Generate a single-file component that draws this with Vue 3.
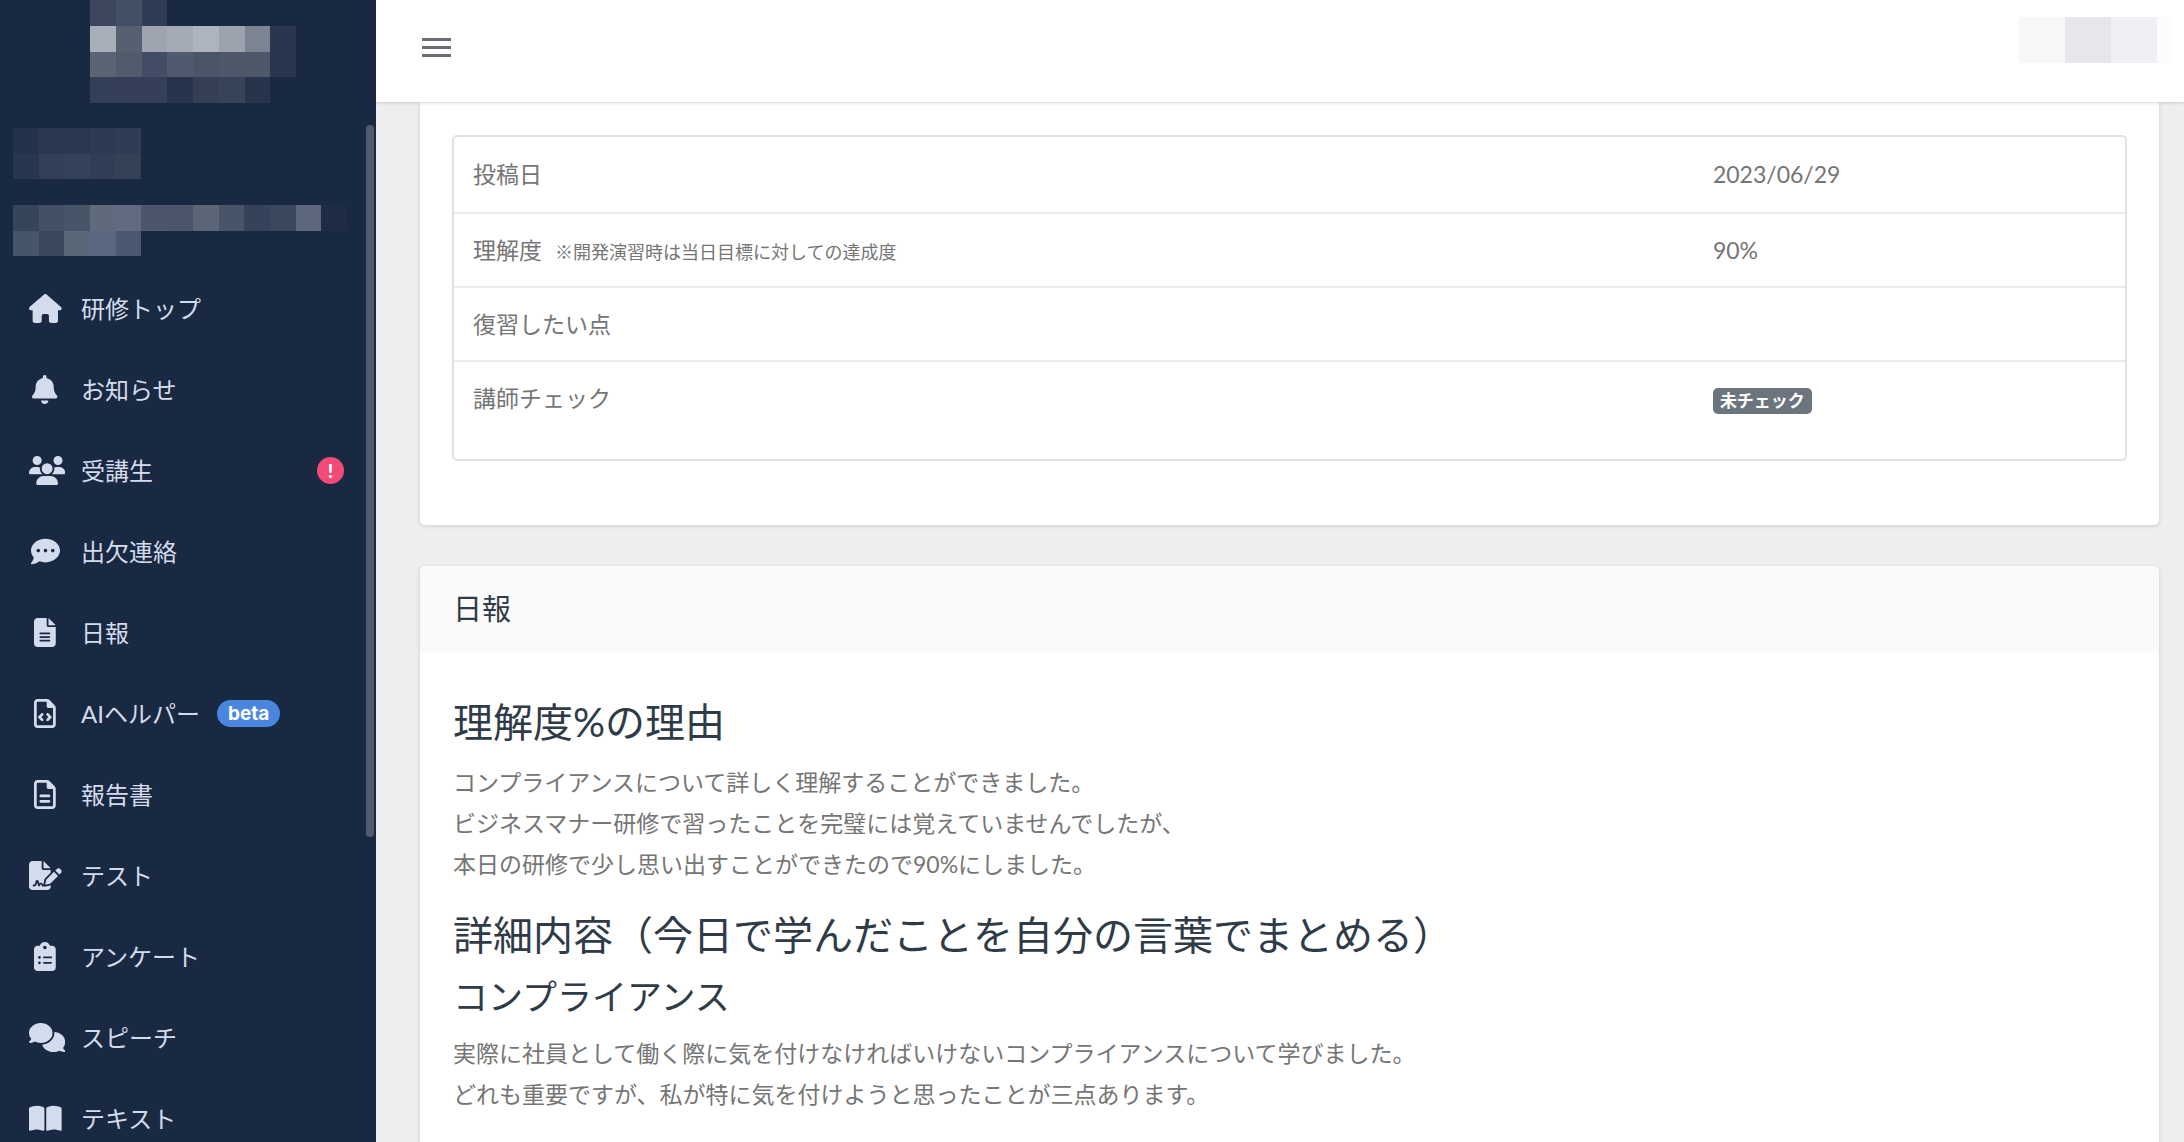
<script setup>
const logo = [
  ['#3c475d', '#434f65', '#303c54'],
  ['#a9afb9', '#556071', '#9ea4b0', '#a4abb5', '#afb5c0', '#9ca2ae', '#7d8491', '#29364d'],
  ['#5a6474', '#505b6c', '#424d65', '#4f5a6f', '#4a5568', '#4d5769', '#4d5869', '#29364d'],
  ['#333f56', '#353f57', '#353f57', '#27344b', '#343f56', '#374359', '#27344b'],
]
const role = [
  ['#253249', '#2a3751', '#2a3750', '#2d3a52', '#2f3d54'],
  ['#283650', '#323f56', '#34425a', '#303d54', '#344258'],
]
const userName = [
  ['#37455b', '#435066', '#475568', '#5f6a7c', '#606a80', '#4b566d', '#4a556a', '#5a6678', '#485569', '#34425a', '#3a485e', '#5c677e', '#1f2c47'],
  ['#47556a', '#3a485c', '#5a6778', '#5b6680', '#4c5870'],
]

const menu = [
  { label: '研修トップ', w: 576, d: 'M575.8 255.5c0 18-15 32.1-32 32.1h-32l.7 160.2c0 2.7-.2 5.4-.5 8.1V472c0 22.1-17.9 40-40 40H456c-1.1 0-2.2 0-3.3-.1c-1.4 .1-2.8 .1-4.2 .1H416 392c-22.1 0-40-17.9-40-40V448 384c0-17.7-14.3-32-32-32H256c-17.7 0-32 14.3-32 32v64 24c0 22.1-17.9 40-40 40H160 128.1c-1.5 0-3-.1-4.5-.2c-1.2 .1-2.4 .2-3.6 .2H104c-22.1 0-40-17.9-40-40V360c0-.9 0-1.9 .1-2.8V287.6H32c-18 0-32-14-32-32.1c0-9 3-17 10-24L266.4 8c7-7 15-8 22-8s15 2 21 7L564.8 231.5c8 7 12 15 11 24z' },
  { label: 'お知らせ', w: 448, d: 'M224 0c-17.7 0-32 14.3-32 32V51.2C119 66 64 130.6 64 208v18.8c0 47-17.3 92.4-48.5 127.6l-7.4 8.3c-8.4 9.4-10.4 22.9-5.3 34.4S19.4 416 32 416H416c12.6 0 24-7.4 29.2-18.9s3.1-25-5.3-34.4l-7.4-8.3C401.3 319.2 384 273.9 384 226.8V208c0-77.4-55-142-128-156.8V32c0-17.7-14.3-32-32-32zm45.3 493.3c12-12 18.7-28.3 18.7-45.3H224 160c0 17 6.7 33.3 18.7 45.3s28.3 18.7 45.3 18.7s33.3-6.7 45.3-18.7z' },
  { label: '受講生', w: 640, alert: '!', d: 'M144 0a80 80 0 1 1 0 160A80 80 0 1 1 144 0zM512 0a80 80 0 1 1 0 160A80 80 0 1 1 512 0zM0 298.7C0 239.8 47.8 192 106.7 192h42.7c15.9 0 31 3.5 44.6 9.7c-1.3 7.2-1.9 14.7-1.9 22.3c0 38.2 16.8 72.5 43.3 96c-.2 0-.4 0-.7 0H21.3C9.6 320 0 310.4 0 298.7zM405.3 320c-.2 0-.4 0-.7 0c26.6-23.5 43.3-57.8 43.3-96c0-7.6-.7-15-1.9-22.3c13.6-6.3 28.7-9.7 44.6-9.7h42.7C592.2 192 640 239.8 640 298.7c0 11.8-9.6 21.3-21.3 21.3H405.3zM224 224a96 96 0 1 1 192 0 96 96 0 1 1 -192 0zM128 485.3C128 411.7 187.7 352 261.3 352H378.7C452.3 352 512 411.7 512 485.3c0 14.7-11.9 26.7-26.7 26.7H154.7c-14.7 0-26.7-11.9-26.7-26.7z' },
  { label: '出欠連絡', w: 512, d: 'M256 448c141.4 0 256-93.1 256-208S397.4 32 256 32S0 125.1 0 240c0 45.1 17.7 86.8 47.7 120.9c-1.9 24.5-11.4 46.3-21.4 62.9c-5.5 9.2-11.1 16.6-15.2 21.6c-2.1 2.5-3.7 4.4-4.9 5.7c-.6 .6-1 1.1-1.3 1.4l-.3 .3c-4.6 4.6-5.9 11.4-3.4 17.4c2.5 6 8.3 9.9 14.8 9.9c28.7 0 57.6-8.9 81.6-19.3c22.9-10 42.4-21.9 54.3-30.6c31.8 11.5 67 17.9 104.1 17.9zM128 208a32 32 0 1 1 0 64 32 32 0 1 1 0-64zm128 0a32 32 0 1 1 0 64 32 32 0 1 1 0-64zm96 32a32 32 0 1 1 64 0 32 32 0 1 1 -64 0z' },
  { label: '日報', w: 384, d: 'M64 0C28.7 0 0 28.7 0 64V448c0 35.3 28.7 64 64 64H320c35.3 0 64-28.7 64-64V160H256c-17.7 0-32-14.3-32-32V0H64zM256 0V128H384L256 0zM112 256H272c8.8 0 16 7.2 16 16s-7.2 16-16 16H112c-8.8 0-16-7.2-16-16s7.2-16 16-16zm0 64H272c8.8 0 16 7.2 16 16s-7.2 16-16 16H112c-8.8 0-16-7.2-16-16s7.2-16 16-16zm0 64H272c8.8 0 16 7.2 16 16s-7.2 16-16 16H112c-8.8 0-16-7.2-16-16s7.2-16 16-16z' },
  { label: 'AIヘルパー', w: 384, tag: 'beta', d: 'M64 464c-8.8 0-16-7.2-16-16V64c0-8.8 7.2-16 16-16H224v80c0 17.7 14.3 32 32 32h80V448c0 8.8-7.2 16-16 16H64zM64 0C28.7 0 0 28.7 0 64V448c0 35.3 28.7 64 64 64H320c35.3 0 64-28.7 64-64V154.5c0-17-6.7-33.3-18.7-45.3L274.7 18.7C262.7 6.7 246.5 0 229.5 0H64zm97 289c9.4-9.4 9.4-24.6 0-33.9s-24.6-9.4-33.9 0L79 303c-9.4 9.4-9.4 24.6 0 33.9l48 48c9.4 9.4 24.6 9.4 33.9 0s9.4-24.6 0-33.9l-31-31 31-31zM257 255c-9.4-9.4-24.6-9.4-33.9 0s-9.4 24.6 0 33.9l31 31-31 31c-9.4 9.4-9.4 24.6 0 33.9s24.6 9.4 33.9 0l48-48c9.4-9.4 9.4-24.6 0-33.9l-48-48z' },
  { label: '報告書', w: 384, d: 'M64 464c-8.8 0-16-7.2-16-16V64c0-8.8 7.2-16 16-16H224v80c0 17.7 14.3 32 32 32h80V448c0 8.8-7.2 16-16 16H64zM64 0C28.7 0 0 28.7 0 64V448c0 35.3 28.7 64 64 64H320c35.3 0 64-28.7 64-64V154.5c0-17-6.7-33.3-18.7-45.3L274.7 18.7C262.7 6.7 246.5 0 229.5 0H64zm56 256c-13.3 0-24 10.7-24 24s10.7 24 24 24H264c13.3 0 24-10.7 24-24s-10.7-24-24-24H120zm0 96c-13.3 0-24 10.7-24 24s10.7 24 24 24H264c13.3 0 24-10.7 24-24s-10.7-24-24-24H120z' },
  { label: 'テスト', w: 576, d: 'M64 0C28.7 0 0 28.7 0 64V448c0 35.3 28.7 64 64 64H320c35.3 0 64-28.7 64-64V428.7c-2.7 1.1-5.4 2-8.2 2.7l-60.1 15c-3 .7-6 1.2-9 1.4c-.9 .1-1.8 .2-2.7 .2H240c-6.1 0-11.6-3.4-14.3-8.8l-8.8-17.7c-1.7-3.4-5.1-5.5-8.8-5.5s-7.2 2.1-8.8 5.5l-8.8 17.7c-2.9 5.9-9.2 9.4-15.7 8.8s-12.1-5.1-13.9-11.3L144 381l-9.8 32.8c-6.1 20.3-24.8 34.2-46 34.2H80c-8.8 0-16-7.2-16-16s7.2-16 16-16h8.2c7.1 0 13.3-4.6 15.3-11.4l14.9-49.5c3.4-11.3 13.8-19.1 25.6-19.1s22.2 7.7 25.6 19.1l11.6 38.6c7.4-6.2 16.8-9.7 26.8-9.7c15.9 0 30.4 9 37.5 23.2l4.4 8.8h8.9c-3.1-8.8-3.7-18.4-1.4-27.8l15-60.1c2.8-11.3 8.6-21.5 16.8-29.7L384 203.6V160H256c-17.7 0-32-14.3-32-32V0H64zM256 0V128H384L256 0zM549.8 139.7c-15.6-15.6-40.9-15.6-56.6 0l-29.4 29.4 71 71 29.4-29.4c15.6-15.6 15.6-40.9 0-56.6l-14.4-14.4zM311.9 321c-4.1 4.1-7 9.2-8.4 14.9l-15 60.1c-1.4 5.5 .2 11.2 4.2 15.2s9.7 5.6 15.2 4.2l60.1-15c5.6-1.4 10.8-4.3 14.9-8.4L512.1 262.7l-71-71L311.9 321z' },
  { label: 'アンケート', w: 384, d: 'M192 0c-41.8 0-77.4 26.7-90.5 64H64C28.7 64 0 92.7 0 128V448c0 35.3 28.7 64 64 64H320c35.3 0 64-28.7 64-64V128c0-35.3-28.7-64-64-64H282.5C269.4 26.7 233.8 0 192 0zm0 64a32 32 0 1 1 0 64 32 32 0 1 1 0-64zM72 272a24 24 0 1 1 48 0 24 24 0 1 1 -48 0zm104-16H304c8.8 0 16 7.2 16 16s-7.2 16-16 16H176c-8.8 0-16-7.2-16-16s7.2-16 16-16zM72 368a24 24 0 1 1 48 0 24 24 0 1 1 -48 0zm88 0c0-8.8 7.2-16 16-16H304c8.8 0 16 7.2 16 16s-7.2 16-16 16H176c-8.8 0-16-7.2-16-16z' },
  { label: 'スピーチ', w: 640, d: 'M208 352c114.9 0 208-78.8 208-176S322.9 0 208 0S0 78.8 0 176c0 38.6 14.7 74.3 39.6 103.4c-3.5 9.4-8.7 17.7-14.2 24.7c-4.8 6.2-9.7 11-13.3 14.3c-1.8 1.6-3.3 2.9-4.3 3.7c-.5 .4-.9 .7-1.1 .8l-.2 .2C1 327.2-1.4 334.4 .8 340.9S9.1 352 16 352c21.8 0 43.8-5.6 62.1-12.5c9.2-3.5 17.8-7.4 25.3-11.4C134.1 343.3 169.8 352 208 352zM448 176c0 112.3-99.1 196.9-216.5 207C255.8 457.4 336.4 512 432 512c38.2 0 73.9-8.7 104.7-23.9c7.5 4 16 7.9 25.2 11.4c18.3 6.9 40.3 12.5 62.1 12.5c6.9 0 13.1-4.5 15.2-11.1c2.1-6.6-.2-13.8-5.8-17.9l-.2-.2c-.2-.2-.6-.4-1.1-.8c-1-.8-2.5-2-4.3-3.7c-3.6-3.3-8.5-8.1-13.3-14.3c-5.5-7-10.7-15.4-14.2-24.7c24.9-29 39.6-64.7 39.6-103.4c0-92.8-84.9-168.9-192.6-175.5c.4 5.1 .6 10.3 .6 15.5z' },
  { label: 'テキスト', w: 576, d: 'M249.6 471.5c10.8 3.8 22.4-4.1 22.4-15.5V78.6c0-4.2-1.6-8.4-5-11C247.4 52 202.4 32 144 32C93.5 32 46.3 45.3 18.1 56.1C6.8 60.5 0 71.7 0 83.8V454.1c0 11.9 12.8 20.2 24.1 16.5C55.6 460.1 105.5 448 144 448c33.9 0 79 14 105.6 23.5zm76.8 0C353 462 398.1 448 432 448c38.5 0 88.4 12.1 119.9 22.6c11.3 3.8 24.1-4.6 24.1-16.5V83.8c0-12.1-6.8-23.3-18.1-27.6C529.7 45.3 482.5 32 432 32c-58.4 0-103.4 20-123 35.6c-3.3 2.6-5 6.8-5 11V456c0 11.4 11.7 19.3 22.4 15.5z' },
]
</script>

<template>
  <div class="app">
    <aside class="sidebar">
      <svg class="logo" viewBox="0 0 8 4" preserveAspectRatio="none" shape-rendering="crispEdges" aria-hidden="true">
        <template v-for="(row, y) in logo" :key="y">
          <rect v-for="(c, x) in row" :key="x" :x="x" :y="y" width="1" height="1" :fill="c" />
        </template>
      </svg>
      <svg class="role" viewBox="0 0 5 2" preserveAspectRatio="none" shape-rendering="crispEdges" aria-hidden="true">
        <template v-for="(row, y) in role" :key="y">
          <rect v-for="(c, x) in row" :key="x" :x="x" :y="y" width="1" height="1" :fill="c" />
        </template>
      </svg>
      <svg class="user-name" viewBox="0 0 13 2" preserveAspectRatio="none" shape-rendering="crispEdges" aria-hidden="true">
        <template v-for="(row, y) in userName" :key="y">
          <rect v-for="(c, x) in row" :key="x" :x="x" :y="y" width="1" height="1" :fill="c" />
        </template>
      </svg>
      <nav class="menu">
        <a v-for="item in menu" :key="item.label" class="menu-item" href="#">
          <span class="icon">
            <svg :viewBox="`0 0 ${item.w} 512`" aria-hidden="true"><path :d="item.d" fill="currentColor" /></svg>
          </span>
          <span class="label">{{ item.label }}</span>
          <span v-if="item.tag" class="tag">{{ item.tag }}</span>
          <span v-if="item.alert" class="alert">{{ item.alert }}</span>
        </a>
      </nav>
      <div class="scroll-thumb"></div>
    </aside>

    <div class="main">
      <header class="topbar">
        <button class="toggle" type="button" aria-label="メニュー">
          <span></span><span></span><span></span>
        </button>
        <div class="account" aria-hidden="true"><i></i><i></i><i></i><i></i></div>
      </header>

      <main class="content">
        <section class="card summary">
          <div class="table-frame">
            <table>
              <tbody>
                <tr>
                  <th scope="row">投稿日</th>
                  <td>2023/06/29</td>
                </tr>
                <tr>
                  <th scope="row">理解度<small>※開発演習時は当日目標に対しての達成度</small></th>
                  <td>90%</td>
                </tr>
                <tr>
                  <th scope="row">復習したい点</th>
                  <td></td>
                </tr>
                <tr>
                  <th scope="row">講師チェック</th>
                  <td><span class="badge">未チェック</span></td>
                </tr>
              </tbody>
            </table>
          </div>
        </section>

        <section class="card report">
          <h4 class="card-header">日報</h4>
          <div class="card-body">
            <h2>理解度%の理由</h2>
            <p>コンプライアンスについて詳しく理解することができました。<br>ビジネスマナー研修で習ったことを完璧には覚えていませんでしたが、<br>本日の研修で少し思い出すことができたので90%にしました。</p>
            <h2>詳細内容（今日で学んだことを自分の言葉でまとめる）</h2>
            <h3>コンプライアンス</h3>
            <p>実際に社員として働く際に気を付けなければいけないコンプライアンスについて学びました。<br>どれも重要ですが、私が特に気を付けようと思ったことが三点あります。</p>
          </div>
        </section>
      </main>
    </div>
  </div>
</template>

<style>
body {
  margin: 0;
  overflow: hidden;
}
</style>

<style scoped>
* {
  box-sizing: border-box;
}

.app {
  display: flex;
  height: 100vh;
  overflow: hidden;
  background: #edefee;
  color: #757575;
  font-family: Lato, "Noto Sans CJK JP", sans-serif;
  font-size: 23px;
}

/* Sidebar */
.sidebar {
  position: relative;
  flex: 0 0 376px;
  overflow: hidden;
  background: #1a2942;
}

.sidebar > svg {
  display: block;
}

.logo {
  width: 206px;
  height: 103px;
  margin: 0 0 25px 90px;
}

.role {
  width: 128px;
  height: 51px;
  margin: 0 0 26px 13px;
}

.user-name {
  width: 334px;
  height: 51px;
  margin: 0 0 12px 13px;
}

.menu-item {
  display: flex;
  align-items: center;
  height: 81px;
  padding: 0 32px 0 29px;
  color: #d3dcec;
  font-size: 24px;
  line-height: 36px;
  text-decoration: none;
}

.icon {
  display: flex;
  flex: none;
  justify-content: safe center;
  width: 32px;
  margin-right: 20px;
}

.icon svg {
  flex: none;
  height: 29px;
}

.tag {
  height: 27px;
  margin-left: 17px;
  padding: 0 11px;
  border-radius: 14px;
  background: #4a86e0;
  color: #fff;
  font-family: Inter, sans-serif;
  font-size: 19px;
  font-weight: 700;
  line-height: 27px;
}

.alert {
  width: 27px;
  height: 27px;
  margin-left: auto;
  border-radius: 50%;
  background: #f34b78;
  color: #fff;
  font-size: 19px;
  font-weight: 900;
  line-height: 27px;
  text-align: center;
}

.scroll-thumb {
  position: absolute;
  top: 125px;
  right: 2px;
  width: 8px;
  height: 712px;
  border-radius: 4px;
  background: #505b70;
}

/* Main column */
.main {
  display: flex;
  flex: 1;
  flex-direction: column;
  min-width: 0;
}

.topbar {
  position: relative;
  display: flex;
  flex: none;
  justify-content: space-between;
  align-items: flex-start;
  height: 102px;
  padding: 17px 12px 0 46px;
  background: #fff;
  box-shadow: 0 1px 3px rgba(0, 0, 0, 0.16);
}

.toggle {
  display: flex;
  flex-direction: column;
  gap: 5px;
  margin: 21px 0 0;
  padding: 0;
  border: 0;
  background: none;
}

.toggle span {
  width: 29px;
  height: 3px;
  background: #6c6e76;
}

.account {
  display: flex;
  height: 46px;
}

.account i {
  width: 46px;
  background: #f6f7f7;
}

.account i:nth-child(2) {
  background: #e6e7ea;
}

.account i:nth-child(3) {
  background: #eeeff2;
}

.account i:nth-child(4) {
  width: 15px;
  background: #fcfcfd;
}

.content {
  flex: 1;
  min-height: 0;
  padding: 0 25px 0 44px;
  overflow: hidden;
}

.card {
  border-radius: 5px;
  background: #fff;
  box-shadow: 0 1px 4px rgba(0, 0, 0, 0.15);
}

.summary {
  margin-bottom: 41px;
  padding: 33px 32px 64px;
  border-radius: 0 0 5px 5px;
}

.table-frame {
  border: 2px solid #e0e1e1;
  border-radius: 5px;
}

table {
  width: 100%;
  border-spacing: 0;
  table-layout: fixed;
}

th,
td {
  height: 74px;
  padding: 19px;
  border-bottom: 2px solid #e9eaea;
  font-weight: 400;
  line-height: 34px;
  text-align: left;
  vertical-align: top;
}

th {
  width: 74.2%;
}

tr:first-child > * {
  height: 77px;
  padding-top: 20px;
}

tr:last-child > * {
  height: 97px;
  border-bottom: 0;
}

small {
  margin-left: 13px;
  font-size: 18px;
  line-height: 18px;
}

.badge {
  display: inline-block;
  padding: 0 7px;
  border-radius: 5px;
  background: #6c757d;
  color: #fff;
  font-size: 17px;
  font-weight: 700;
  line-height: 26px;
}

h2,
h3,
h4 {
  margin: 0;
  color: #2f3b47;
  font-weight: 400;
}

.card-header {
  padding: 24px 33px;
  border-radius: 5px 5px 0 0;
  background: #fafafa;
  font-size: 29px;
  line-height: 38px;
}

.card-body {
  padding: 46px 33px;
}

h2 {
  margin-bottom: 16px;
  font-size: 40px;
  line-height: 48px;
}

h3 {
  margin-bottom: 16px;
  font-size: 35px;
  line-height: 42px;
}

p {
  margin: 0 0 26px;
  line-height: 41px;
}
</style>
